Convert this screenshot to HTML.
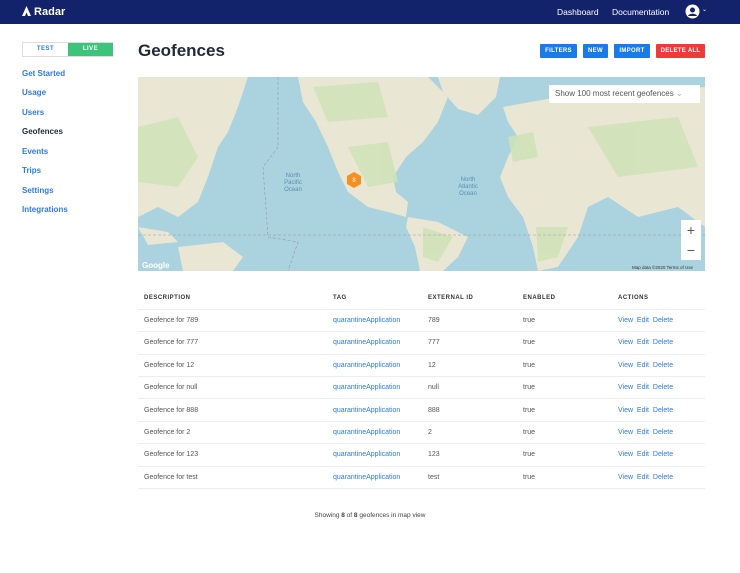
<!DOCTYPE html>
<html><head><meta charset="utf-8"><style>
*{box-sizing:border-box;margin:0;padding:0}
body{width:740px;height:573px;background:#fff;font-family:"Liberation Sans",sans-serif;position:relative;overflow:hidden}
.nav{position:absolute;left:0;top:0;width:740px;height:24px;background:#12226b;color:#fff}
.logo{position:absolute;left:22px;top:6px;font-weight:bold;font-size:11px}
.nav .l{position:absolute;top:7px;font-size:8.5px}
.tog{position:absolute;left:22px;top:42px;width:91px;height:15px;border:1px solid #ddd;font-size:6px;font-weight:bold;letter-spacing:.5px}
.tog span{position:absolute;top:0;height:13px;line-height:13px;text-align:center;width:45px}
.side a{position:absolute;left:22px;font-size:8px;font-weight:bold;color:#2c7be5;text-decoration:none}
h1{position:absolute;left:138px;top:41px;font-size:17px;color:#1e2a3a;font-weight:bold}
.btn{position:absolute;top:44px;height:14px;line-height:14px;color:#fff;font-size:6px;font-weight:bold;text-align:center;border-radius:1px;letter-spacing:.3px}
.map{position:absolute;left:138px;top:77px;width:567px;height:194px;background:#aad3df;overflow:hidden}
table{position:absolute;left:138px;top:287px;width:567px;border-collapse:collapse;font-size:7px;color:#555}
td,th{height:22.4px;text-align:left;border-bottom:1px solid #eee;padding-left:6px}
th{font-size:6px;font-weight:bold;letter-spacing:.5px;color:#333}
.b{color:#2c7be5}
.foot{position:absolute;left:0;width:740px;top:512px;text-align:center;font-size:6.5px;color:#444}
</style></head><body>
<div class="nav">
<div class="logo"><svg width="9" height="10" viewBox="0 0 9 10" style="vertical-align:-1px"><path d="M4.5 0L9 10H6L4.5 6.5 3 10H0z" fill="#fff"/></svg> Radar</div>
<div class="l" style="left:557px">Dashboard</div>
<div class="l" style="left:612px">Documentation</div>
<svg style="position:absolute;left:685px;top:4px" width="15" height="15" viewBox="0 0 15 15"><circle cx="7.5" cy="7.5" r="7" fill="#fff"/><circle cx="7.5" cy="6" r="2.5" fill="#12226b"/><path d="M3 12c1-3 8-3 9 0" fill="#12226b"/></svg>
<div class="l" style="left:702px;top:6px;font-size:6px">⌄</div>
</div>
<div class="tog"><span style="left:0;color:#2c7be5">TEST</span><span style="left:45px;background:#3cc47c;color:#fff">LIVE</span></div>
<div class="side">
<a style="top:69px">Get Started</a><a style="top:88px">Usage</a><a style="top:108px">Users</a>
<a style="top:127px;color:#1e2a3a">Geofences</a><a style="top:147px">Events</a><a style="top:166px">Trips</a>
<a style="top:186px">Settings</a><a style="top:205px">Integrations</a></div>
<h1>Geofences</h1>
<div class="btn" style="left:540px;width:37px;background:#1a7be8">FILTERS</div>
<div class="btn" style="left:583px;width:25px;background:#1a7be8">NEW</div>
<div class="btn" style="left:614px;width:36px;background:#1a7be8">IMPORT</div>
<div class="btn" style="left:656px;width:49px;background:#f03a3a">DELETE ALL</div>
<div class="map">
<svg width="567" height="194" viewBox="0 0 567 194">
<g fill="#e9e6d3">
<path d="M0 0H110L100 30 90 55 80 70 70 100 60 125 40 140 20 130 0 140z"/>
<path d="M160 0H290L310 20 300 45 285 65 268 80 255 100 258 115 270 125 268 140 250 135 230 130 210 115 200 95 190 70 178 45 165 25z"/>
<path d="M300 0H362L358 20 340 38 320 32 305 15z"/>
<path d="M270 140L300 145 330 160 320 180 305 194H282L277 170 268 150z"/>
<path d="M365 30L420 20 567 10V150L540 130 500 140 470 120 450 130 440 160 420 190 400 194 395 170 385 140 370 120 362 100 370 80 380 60 370 45z"/>
<path d="M40 170L85 165 105 180 95 194H45z"/>
<path d="M0 150L30 155 40 165 10 168z"/>
</g>
<g fill="#cfe3b8" opacity=".85">
<path d="M0 50L40 40 60 80 40 110 0 105z"/><path d="M210 70L250 65 260 105 230 110z"/><path d="M285 150L315 160 300 185 285 180z"/><path d="M398 150L430 150 420 180 400 185z"/><path d="M450 50L540 40 560 90 480 100z"/><path d="M175 10L240 5 250 40 190 45z"/><path d="M370 60L395 55 400 80 375 85z"/>
</g>
<path d="M140 0V70L125 90 130 160 160 165 150 194" stroke="#999" stroke-dasharray="3,2" fill="none" stroke-width=".6"/>
<path d="M0 158H567" stroke="#999" stroke-dasharray="3,2" stroke-width=".6"/>
<polygon points="216,95 223,99 223,107 216,111 209,107 209,99" fill="#f5901e"/>
<text x="216" y="105" font-size="6" fill="#fff" text-anchor="middle" font-family="Liberation Sans">8</text>
<text x="155" y="100" font-size="6" fill="#5a8fb0" text-anchor="middle" font-family="Liberation Sans">North</text>
<text x="155" y="107" font-size="6" fill="#5a8fb0" text-anchor="middle" font-family="Liberation Sans">Pacific</text>
<text x="155" y="114" font-size="6" fill="#5a8fb0" text-anchor="middle" font-family="Liberation Sans">Ocean</text>
<text x="330" y="104" font-size="6" fill="#5a8fb0" text-anchor="middle" font-family="Liberation Sans">North</text>
<text x="330" y="111" font-size="6" fill="#5a8fb0" text-anchor="middle" font-family="Liberation Sans">Atlantic</text>
<text x="330" y="118" font-size="6" fill="#5a8fb0" text-anchor="middle" font-family="Liberation Sans">Ocean</text>
<text x="4" y="191" font-size="8" fill="#fff" font-weight="bold" font-family="Liberation Sans">Google</text>
<text x="494" y="192" font-size="4.5" fill="#333" font-family="Liberation Sans">Map data ©2020   Terms of Use</text>
</svg>
<div style="position:absolute;left:411px;top:8px;width:151px;height:18px;background:#fff;font-size:8px;color:#555;line-height:18px;padding-left:6px">Show 100 most recent geofences <span style="color:#aaa">⌄</span></div>
<div style="position:absolute;left:543px;top:143px;width:20px;height:40px;background:#fff;font-size:14px;color:#555;text-align:center;line-height:20px">+<br>−</div>
</div>
<table>
<tr><th style="width:189px">DESCRIPTION</th><th style="width:95px">TAG</th><th style="width:95px">EXTERNAL ID</th><th style="width:95px">ENABLED</th><th>ACTIONS</th></tr>
<tr><td>Geofence for 789</td><td class="b">quarantineApplication</td><td>789</td><td>true</td><td class="b">View &nbsp;Edit &nbsp;Delete</td></tr>
<tr><td>Geofence for 777</td><td class="b">quarantineApplication</td><td>777</td><td>true</td><td class="b">View &nbsp;Edit &nbsp;Delete</td></tr>
<tr><td>Geofence for 12</td><td class="b">quarantineApplication</td><td>12</td><td>true</td><td class="b">View &nbsp;Edit &nbsp;Delete</td></tr>
<tr><td>Geofence for null</td><td class="b">quarantineApplication</td><td>null</td><td>true</td><td class="b">View &nbsp;Edit &nbsp;Delete</td></tr>
<tr><td>Geofence for 888</td><td class="b">quarantineApplication</td><td>888</td><td>true</td><td class="b">View &nbsp;Edit &nbsp;Delete</td></tr>
<tr><td>Geofence for 2</td><td class="b">quarantineApplication</td><td>2</td><td>true</td><td class="b">View &nbsp;Edit &nbsp;Delete</td></tr>
<tr><td>Geofence for 123</td><td class="b">quarantineApplication</td><td>123</td><td>true</td><td class="b">View &nbsp;Edit &nbsp;Delete</td></tr>
<tr><td>Geofence for test</td><td class="b">quarantineApplication</td><td>test</td><td>true</td><td class="b">View &nbsp;Edit &nbsp;Delete</td></tr>
</table>
<div class="foot">Showing <b>8</b> of <b>8</b> geofences in map view</div>
</body></html>
